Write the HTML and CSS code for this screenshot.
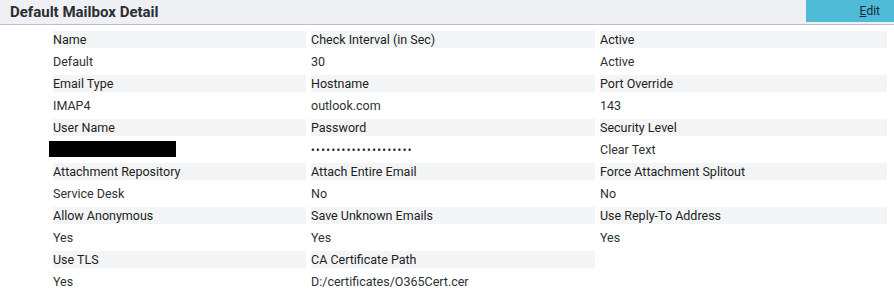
FILE: index.html
```html
<!doctype html>
<html lang="en">
	<head>
	<meta charset="utf-8">
	<title>Default Mailbox Detail</title>
	<link rel="stylesheet" href="styles.css">
	</head>
	<body>

		<div class="panel-head">
			<h2 class="panel-title">Default Mailbox Detail</h2>
			<a class="btn-edit" href="#"><u>E</u>dit</a>
		</div>

		<div class="detail-grid">
			<div class="lbl">Name</div>
			<div class="lbl">Check Interval (in Sec)</div>
			<div class="lbl">Active</div>
			<div class="val">Default</div>
			<div class="val">30</div>
			<div class="val">Active</div>

			<div class="lbl">Email Type</div>
			<div class="lbl">Hostname</div>
			<div class="lbl">Port Override</div>
			<div class="val">IMAP4</div>
			<div class="val">outlook.com</div>
			<div class="val">143</div>

			<div class="lbl">User Name</div>
			<div class="lbl">Password</div>
			<div class="lbl">Security Level</div>
			<div class="val"><span class="redacted"></span></div>
			<div class="val"><span class="pw">••••••••••••••••••••</span></div>
			<div class="val">Clear Text</div>

			<div class="lbl">Attachment Repository</div>
			<div class="lbl">Attach Entire Email</div>
			<div class="lbl">Force Attachment Splitout</div>
			<div class="val">Service Desk</div>
			<div class="val">No</div>
			<div class="val">No</div>

			<div class="lbl">Allow Anonymous</div>
			<div class="lbl">Save Unknown Emails</div>
			<div class="lbl">Use Reply-To Address</div>
			<div class="val">Yes</div>
			<div class="val">Yes</div>
			<div class="val">Yes</div>

			<div class="lbl">Use TLS</div>
			<div class="lbl">CA Certificate Path</div>
			<div class="empty"></div>
			<div class="val">Yes</div>
			<div class="val">D:/certificates/O365Cert.cer</div>
			<div class="empty"></div>
		</div>

	</body>
</html>
```

FILE: styles.css
```css
body {
	margin: 0;
	background: #fff;
	font-family: Roboto, "Noto Sans", sans-serif;
	font-size: 12.5px;
	color: #222;
}

.panel-head {
	display: flex;
	align-items: flex-start;
	justify-content: space-between;
	height: 24px;
	background-color: #eef0f3;
	border-bottom: 1px solid #b9c0ca;
}

.panel-title {
	margin: 0;
	padding: 3px 0 0 10px;
	font-size: 15px;
	font-weight: bold;
	color: #2a2d31;
}

.btn-edit {
	display: flex;
	align-items: center;
	justify-content: flex-end;
	width: 74px;
	height: 22px;
	padding-right: 14px;
	background-color: #4ebcd7;
	color: #1b2a35;
	text-decoration: none;
	font-size: 12px;
}

.detail-grid {
	display: grid;
	grid-template-columns: 253px 284px 287px;
	grid-auto-rows: 17px;
	gap: 5px;
	margin: 6px 0 0 53px;
}

.lbl,
.val {
	line-height: 17px;
	white-space: nowrap;
}

.lbl {
	background-color: #f3f4f6;
	color: #1c1e22;
}

.val {
	color: #2e3134;
}

.redacted {
	display: block;
	width: 127px;
	height: 16px;
	margin: 0 0 0 -4px;
	background: #000;
}

.pw {
	font-size: 10px;
	font-weight: bold;
	letter-spacing: 1.5px;
	color: #1e2a48;
}
```
